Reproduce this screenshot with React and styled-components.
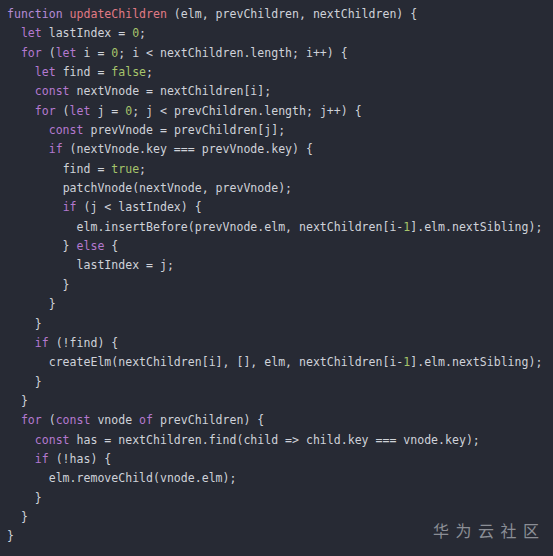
import React from "react";
import styled, { createGlobalStyle } from "styled-components";

const code = `function updateChildren (elm, prevChildren, nextChildren) {
  let lastIndex = 0;
  for (let i = 0; i < nextChildren.length; i++) {
    let find = false;
    const nextVnode = nextChildren[i];
    for (let j = 0; j < prevChildren.length; j++) {
      const prevVnode = prevChildren[j];
      if (nextVnode.key === prevVnode.key) {
        find = true;
        patchVnode(nextVnode, prevVnode);
        if (j < lastIndex) {
          elm.insertBefore(prevVnode.elm, nextChildren[i-1].elm.nextSibling);
        } else {
          lastIndex = j;
        }
      }
    }
    if (!find) {
      createElm(nextChildren[i], [], elm, nextChildren[i-1].elm.nextSibling);
    }
  }
  for (const vnode of prevChildren) {
    const has = nextChildren.find(child => child.key === vnode.key);
    if (!has) {
      elm.removeChild(vnode.elm);
    }
  }
}`;

const keywords = ["function", "let", "for", "const", "if", "else", "of"];
const literals = ["true", "false"];

const tokenize = (line) =>
  line.split(/(\b[A-Za-z_]\w*\b|\b\d+\b)/).map((part) => {
    if (keywords.includes(part)) return { text: part, kind: part === "function" ? "fn" : "kw" };
    if (literals.includes(part) || /^\d+$/.test(part)) return { text: part, kind: "lit" };
    if (part === "updateChildren") return { text: part, kind: "name" };
    return { text: part, kind: "plain" };
  });

const colors = {
  fn: "#b58ad6",
  kw: "#b479cf",
  lit: "#a6c46b",
  name: "#e07a84",
  plain: "#cfd2d9",
};

const GlobalStyle = createGlobalStyle`
  html, body {
    margin: 0;
    padding: 0;
    background: #272a34;
  }
`;

const Editor = styled.div`
  position: relative;
  width: 553px;
  height: 556px;
  background: #272a34;
  overflow: hidden;
`;

const Code = styled.pre`
  margin: 0;
  padding: 5px 0 0 7px;
  font-family: "DejaVu Sans Mono", "Liberation Mono", monospace;
  font-size: 11.55px;
  line-height: 19.35px;
  color: #cfd2d9;
`;

const Line = styled.div`
  white-space: pre;
  height: 19.35px;
`;

const Token = styled.span`
  color: ${(p) => colors[p.$kind]};
`;

const Watermark = styled.div`
  position: absolute;
  left: 433px;
  top: 520px;
  font-family: "Noto Sans CJK SC", sans-serif;
  font-size: 16px;
  line-height: 20px;
  letter-spacing: 6.5px;
  color: #8b8e96;
`;

export default function App() {
  return (
    <>
      <GlobalStyle />
      <Editor>
        <Code>
          {code.split("\n").map((line, i) => (
            <Line key={i}>
              {tokenize(line).map((t, j) => (
                <Token key={j} $kind={t.kind}>
                  {t.text}
                </Token>
              ))}
            </Line>
          ))}
        </Code>
        <Watermark>华为云社区</Watermark>
      </Editor>
    </>
  );
}
